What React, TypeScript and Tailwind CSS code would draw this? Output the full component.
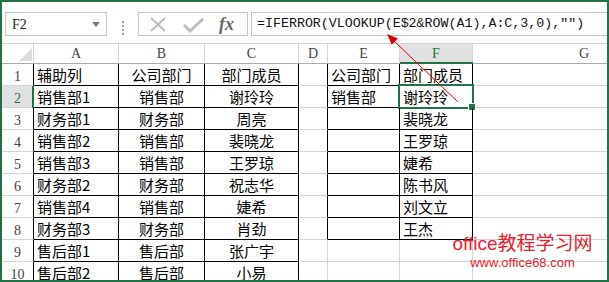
import React from "react";

const COLS = [32, 85, 86, 94, 29, 72, 73];
const LETTERS = ["", "A", "B", "C", "D", "E", "F", "G"];

const ROWS: string[][] = [
  ["辅助列", "公司部门", "部门成员", "", "公司部门", "部门成员"],
  ["销售部1", "销售部", "谢玲玲", "", "销售部", "谢玲玲"],
  ["财务部1", "财务部", "周亮", "", "", "裴晓龙"],
  ["销售部2", "销售部", "裴晓龙", "", "", "王罗琼"],
  ["销售部3", "销售部", "王罗琼", "", "", "婕希"],
  ["财务部2", "财务部", "祝志华", "", "", "陈书风"],
  ["销售部4", "销售部", "婕希", "", "", "刘文立"],
  ["财务部3", "财务部", "肖劲", "", "", "王杰"],
  ["售后部1", "售后部", "张广宇", "", "", ""],
  ["售后部2", "售后部", "小易", "", "", ""],
];

const GRID = "#d4d4d4";
const BLACK = "#000000";

const cjk = { fontFamily: '"Noto Sans CJK SC", sans-serif' };
const serif = { fontFamily: '"Liberation Serif", "Noto Sans CJK SC", serif' };
const mono = { fontFamily: '"Liberation Mono", "Noto Sans CJK SC", monospace' };

function HeaderRow() {
  return (
    <div className="flex h-[21px] border-t border-[#d4d4d4] border-b border-b-[#ababab]">
      {LETTERS.map((l, i) => {
        const w = i < COLS.length ? COLS[i] : undefined;
        const selected = l === "F";
        return (
          <div
            key={i}
            className={
              "relative flex items-center justify-center text-[14px] leading-none " +
              (i < COLS.length ? "border-r border-[#d4d4d4] " : "flex-1 ") +
              (selected ? "bg-[#e1e1e1] text-[#217346]" : "text-[#444]")
            }
            style={{ width: w, ...serif }}
          >
            {i === 0 ? (
              <svg width="13" height="13" className="absolute right-[1px] bottom-[2px]" viewBox="0 0 13 13">
                <polygon points="13,0 13,13 0,13" fill="#dcdcdc" />
              </svg>
            ) : (
              <span className={l === "G" ? "pl-[88px]" : ""}>{l}</span>
            )}
            {selected && <div className="absolute left-0 right-[-1px] bottom-[-1px] h-[2px] bg-[#217346]" />}
          </div>
        );
      })}
    </div>
  );
}

function DataRow({ r, cells }: { r: number; cells: string[] }) {
  const rowNum = r + 1;
  const rtab = rowNum <= 8;

  const styleFor = (c: number): React.CSSProperties => {
    let right = GRID;
    let bottom = GRID;
    if (c === 0) {
      right = BLACK;
    } else if (c >= 1 && c <= 3) {
      right = BLACK;
      bottom = BLACK;
    } else if (c === 4) {
      right = rtab ? BLACK : GRID;
    } else if (c === 5 || c === 6) {
      right = rtab ? BLACK : GRID;
      bottom = rtab ? BLACK : GRID;
    }
    return { borderRightColor: right, borderBottomColor: bottom };
  };

  return (
    <div className="flex h-[22px]">
      <div
        className={
          "relative flex items-end justify-center border-r border-b pb-[1px] text-[14px] leading-none " +
          (rowNum === 2 ? "bg-[#e1e1e1] text-[#217346]" : "text-[#444]")
        }
        style={{ width: COLS[0], ...serif, ...styleFor(0) }}
      >
        <span>{rowNum}</span>
        {rowNum === 2 && <div className="absolute right-[-1px] top-0 bottom-[-1px] w-[2px] bg-[#217346]" />}
      </div>
      {[1, 2, 3, 4, 5, 6].map((c) => {
        const text = cells[c - 1] ?? "";
        const align = c === 2 || c === 3 ? "justify-center" : "justify-start pl-[3px]";
        const sel = c === 6 && rowNum === 2;
        return (
          <div
            key={c}
            className={"relative flex items-center border-r border-b text-[15px] leading-none text-black " + align}
            style={{ width: COLS[c], ...cjk, ...styleFor(c) }}
          >
            <span className="whitespace-nowrap">{text}</span>
            {sel && (
              <>
                <div className="absolute left-[-2px] top-[-2px] right-[-2px] bottom-[-2px] border-2 border-[#217346]" />
                <div className="absolute right-[-4px] bottom-[-4px] w-[6px] h-[6px] bg-[#217346] border border-white box-content" />
              </>
            )}
          </div>
        );
      })}
      <div className="flex-1 border-b" style={{ borderBottomColor: GRID }} />
    </div>
  );
}

function FormulaBar() {
  return (
    <div className="flex h-[41px] pt-[10px] pl-[3px]">
      <div className="relative flex h-[24px] w-[102px] items-center border border-[#c6c6c6] pl-[6px] text-[14px] text-[#222]" style={serif}>
        <span>F2</span>
        <svg className="absolute right-[6px] top-[9px]" width="8" height="5" viewBox="0 0 8 5">
          <polygon points="0,0 8,0 4,5" fill="#777" />
        </svg>
      </div>
      <div className="flex w-[31px] flex-col items-center justify-center gap-[2px]">
        <div className="h-[2px] w-[2px] bg-[#a0a0a0]" />
        <div className="h-[2px] w-[2px] bg-[#a0a0a0]" />
        <div className="h-[2px] w-[2px] bg-[#a0a0a0]" />
        <div className="h-[2px] w-[2px] bg-[#a0a0a0]" />
      </div>
      <div className="relative h-[24px] w-[110px] border border-[#c6c6c6]">
        <svg className="absolute left-[11px] top-[4px]" width="16" height="15" viewBox="0 0 16 15">
          <line x1="1" y1="1" x2="15" y2="14" stroke="#bdbdbd" strokeWidth="2" />
          <line x1="15" y1="1" x2="1" y2="14" stroke="#bdbdbd" strokeWidth="2" />
        </svg>
        <svg className="absolute left-[44px] top-[5px]" width="21" height="15" viewBox="0 0 21 15">
          <polyline points="1,7 7,13 20,1" fill="none" stroke="#bdbdbd" strokeWidth="3" />
        </svg>
        <span
          className="absolute left-[80px] top-[0px] text-[18px] italic font-bold leading-[22px] text-[#666]"
          style={serif}
        >
          fx
        </span>
      </div>
      <div
        className="ml-[3px] flex h-[24px] flex-1 items-center border-y border-l border-[#c6c6c6] pl-[5px] text-[13.3px] text-[#111] whitespace-nowrap"
        style={mono}
      >
        =IFERROR(VLOOKUP(E$2&amp;ROW(A1),A:C,3,0),"")
      </div>
    </div>
  );
}

export default function App() {
  return (
    <div lang="zh-CN" className="relative h-[282px] w-[609px] overflow-hidden border-2 border-[#217346] bg-white">
      <FormulaBar />
      <HeaderRow />
      {ROWS.map((cells, r) => (
        <DataRow key={r} r={r} cells={cells} />
      ))}
      <svg className="pointer-events-none absolute left-[-2px] top-[-2px]" width="609" height="282" viewBox="0 0 609 282">
        <line x1="458" y1="102" x2="394" y2="41" stroke="#e00000" strokeWidth="1" />
        <polygon points="387,34 398,38.4 391.8,44.8" fill="#e00000" />
      </svg>
      <div className="pointer-events-none absolute left-[438px] top-[231px] w-[165px] text-center text-[#e8212e]">
        <div className="text-[19px] leading-[22px]" style={{ fontFamily: '"Liberation Sans", "Noto Sans CJK SC", sans-serif' }}>
          office教程学习网
        </div>
        <div className="text-[13px] leading-[15px]" style={{ fontFamily: '"Liberation Sans", sans-serif' }}>
          www.office68.com
        </div>
      </div>
    </div>
  );
}
